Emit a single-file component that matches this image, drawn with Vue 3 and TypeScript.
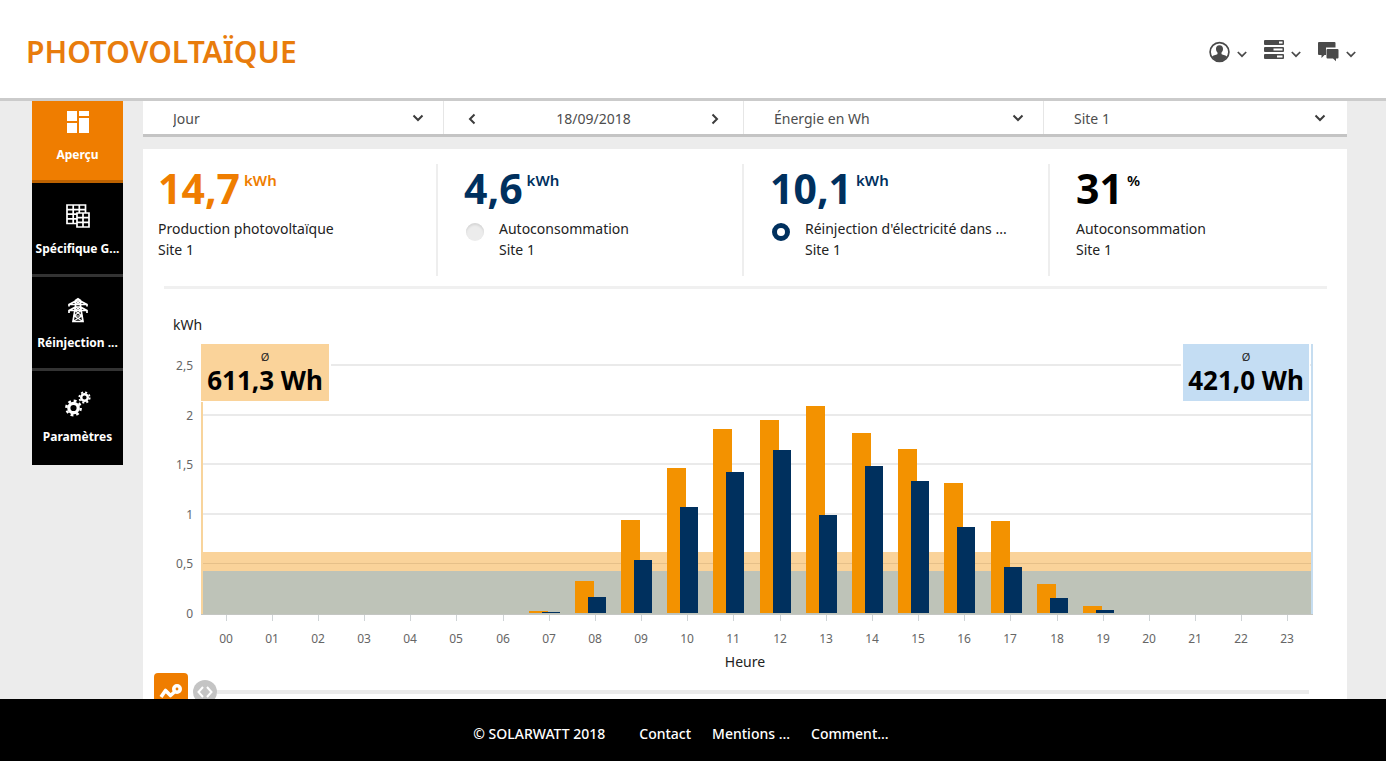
<script setup lang="ts">
import { computed, ref } from 'vue'

interface Stat {
  id: string
  value: string
  unit: string
  label: string
  site: string
  tone: 'orange' | 'navy' | 'black'
  selectable: boolean
}

const period = ref('Jour')
const mode = ref('Énergie en Wh')
const site = ref('Site 1')
const series = ref('reinjection')

const stats: Stat[] = [
  { id: 'production', value: '14,7', unit: 'kWh', label: 'Production photovoltaïque', site: 'Site 1', tone: 'orange', selectable: false },
  { id: 'autoconso', value: '4,6', unit: 'kWh', label: 'Autoconsommation', site: 'Site 1', tone: 'navy', selectable: true },
  { id: 'reinjection', value: '10,1', unit: 'kWh', label: "Réinjection d'électricité dans ...", site: 'Site 1', tone: 'navy', selectable: true },
  { id: 'taux', value: '31', unit: '%', label: 'Autoconsommation', site: 'Site 1', tone: 'black', selectable: false },
]

const production = [0, 0, 0, 0, 0, 0, 0, 0.02, 0.32, 0.94, 1.465, 1.855, 1.945, 2.09, 1.815, 1.655, 1.31, 0.93, 0.29, 0.075, 0, 0, 0, 0]
const feedIn = [0, 0, 0, 0, 0, 0, 0, 0.01, 0.16, 0.53, 1.07, 1.425, 1.645, 0.99, 1.485, 1.33, 0.865, 0.46, 0.155, 0.03, 0, 0, 0, 0]

const plot = { left: 59, right: 1168, top: 44, zero: 313, base: 314, unit: 99.2 }
const step = (plot.right - plot.left) / 24
const yOf = (v: number) => Math.round(plot.zero - v * plot.unit)

const gridLines = [
  { label: '2,5', y: yOf(2.5) },
  { label: '2', y: yOf(2) },
  { label: '1,5', y: yOf(1.5) },
  { label: '1', y: yOf(1) },
  { label: '0,5', y: yOf(0.5) },
]
const avgProduction = yOf(0.6113)
const avgFeedIn = yOf(0.421)

const hours = computed(() =>
  production.map((p, i) => {
    const prodY = yOf(p)
    const feedY = yOf(feedIn[i])
    return {
      label: String(i).padStart(2, '0'),
      center: Math.round(plot.left + step * (i + 0.5)),
      tick: Math.floor(plot.left + step * (i + 0.5) - i / 24),
      prodY,
      feedY,
      prodHeight: plot.zero - prodY,
      feedHeight: plot.zero - feedY,
    }
  }),
)
</script>

<template>
  <div class="page">
    <header class="header">
      <h1>PHOTOVOLTAÏQUE</h1>
      <nav class="tools">
        <button type="button" aria-label="Compte">
          <svg width="21" height="24" viewBox="0 0 21 24">
            <circle cx="10.5" cy="12" r="9.4" fill="none" stroke="#4a4a4a" stroke-width="1.7" />
            <path d="M10.5 5.200c2.600 0 3.700 1.700 3.500 4-.1 1.700-.9 2.600-1.500 3.300v1.600c.3.900 3.800 1.100 5.400 2.400-1.700 3-4.500 4.700-7.400 4.700s-5.700-1.700-7.400-4.700c1.600-1.300 5.100-1.500 5.400-2.400v-1.600c-.6-.7-1.400-1.600-1.500-3.300-.2-2.300.9-4 3.500-4z" fill="#4a4a4a" />
          </svg>
          <svg class="chev" width="10" height="24" viewBox="0 0 10 24"><path d="M.8 12l4.200 4.200L9.200 12" /></svg>
        </button>
        <button type="button" aria-label="Installations">
          <svg width="20" height="24" viewBox="0 0 20 24">
            <g fill="#4a4a4a">
              <rect y="0" width="20" height="5" rx="1" />
              <rect y="7" width="20" height="5" rx="1" />
              <rect y="14" width="20" height="5" rx="1" />
            </g>
            <path d="M15 2.500h3.500M9.500 9.500h9M13 16.500h5.500" stroke="#fff" stroke-width="1.800" />
          </svg>
          <svg class="chev" width="10" height="24" viewBox="0 0 10 24"><path d="M.8 12l4.200 4.200L9.200 12" /></svg>
        </button>
        <button type="button" aria-label="Messages">
          <svg width="21" height="24" viewBox="0 0 21 24">
            <path d="M1 2h15.500q1 0 1 1v4.500H8v7.500H6.500L3.500 18v-3H1q-1 0-1-1V3q0-1 1-1z" fill="#4a4a4a" />
            <path d="M9.500 9h10q1 0 1 1v7.500q0 1-1 1H18v2.800l-3-2.800H9.500q-1 0-1-1V10q0-1 1-1z" fill="#4a4a4a" />
          </svg>
          <svg class="chev" width="10" height="24" viewBox="0 0 10 24"><path d="M.8 12l4.200 4.200L9.200 12" /></svg>
        </button>
      </nav>
    </header>

    <div class="body">
      <nav class="sidebar">
        <a href="#apercu" class="active">
          <svg width="24" height="24" viewBox="0 0 24 24" fill="#fff">
            <path d="M1 1h10v10H1zM13 1h10v5H13zM1 13h10v10H1zM13 8h10v15H13z" />
          </svg>
          <span>Aperçu</span>
        </a>
        <a href="#specifique">
          <svg width="24" height="24" viewBox="0 0 24 24" fill="none" stroke="#fff" stroke-width="1.700">
            <path d="M1 1h18.500v18.500H1zM1 5.600h18.500M1 10.200h18.500M1 14.900h18.500M7.200 1v18.500M13.300 1v18.500" />
            <path d="M11 9h12v14H11z" fill="#000" />
            <path d="M11 13.600h12M11 18.300h12M17 9v14" />
          </svg>
          <span>Spécifique G...</span>
        </a>
        <a href="#reinjection">
          <svg width="24" height="24" viewBox="0 0 24 24" fill="none" stroke="#fff" stroke-width="1.700">
            <path d="M9.500 2.500L12 .8l2.500 1.700v6l2.500 15H7l2.500-15zM3 8.500V6.500L9.500 3h5L21 6.500v2M3 6.500h18M3 15v-2.500L9.300 9h5.400l6.300 3.500V15M3 12.500h18" />
            <path d="M9.500 3l5 3.500M14.500 3l-5 3.500M9.500 9l5.500 3.500M14.500 9L9 12.500l7 5.500-9 5.500M15 12.500L8 18l9 5.500M8 18h8" stroke-width="1.200" />
          </svg>
          <span>Réinjection ...</span>
        </a>
        <a href="#parametres">
          <svg width="26" height="26" viewBox="0 0 26 26" fill="none" stroke="#fff">
            <circle cx="8.500" cy="17" r="4.700" stroke-width="3.200" />
            <circle cx="8.500" cy="17" r="7.200" stroke-width="2.400" stroke-dasharray="2.830 2.824" />
            <circle cx="19.500" cy="6.500" r="3.300" stroke-width="2.400" />
            <circle cx="19.500" cy="6.500" r="5.200" stroke-width="1.800" stroke-dasharray="2.050 2.034" />
          </svg>
          <span>Paramètres</span>
        </a>
      </nav>

      <main class="content">
        <div class="filters">
          <label class="filter">
            <select v-model="period" aria-label="Période"><option>Jour</option></select>
            <svg class="arrow" width="12" height="8" viewBox="0 0 12 8"><path d="M1.500 1.500L6 6l4.500-4.500" /></svg>
          </label>
          <div class="filter date">
            <button type="button" aria-label="Jour précédent">
              <svg class="arrow" width="8" height="12" viewBox="0 0 8 12"><path d="M6.500 1.500L2 6l4.500 4.500" /></svg>
            </button>
            <span>18/09/2018</span>
            <button type="button" aria-label="Jour suivant">
              <svg class="arrow" width="8" height="12" viewBox="0 0 8 12"><path d="M1.500 1.500L6 6l-4.500 4.500" /></svg>
            </button>
          </div>
          <label class="filter">
            <select v-model="mode" aria-label="Unité"><option>Énergie en Wh</option></select>
            <svg class="arrow" width="12" height="8" viewBox="0 0 12 8"><path d="M1.500 1.500L6 6l4.500-4.500" /></svg>
          </label>
          <label class="filter">
            <select v-model="site" aria-label="Site"><option>Site 1</option></select>
            <svg class="arrow" width="12" height="8" viewBox="0 0 12 8"><path d="M1.500 1.500L6 6l4.500-4.500" /></svg>
          </label>
        </div>

        <section class="card">
          <div class="stats">
            <div v-for="s in stats" :key="s.id" class="stat" :class="s.tone">
              <div class="figure">
                <strong>{{ s.value }}</strong>
                <span class="unit">{{ s.unit }}</span>
              </div>
              <label v-if="s.selectable" class="caption">
                <input v-model="series" type="radio" name="series" :value="s.id" />
                <span>{{ s.label }}<br />{{ s.site }}</span>
              </label>
              <p v-else class="caption">{{ s.label }}<br />{{ s.site }}</p>
            </div>
          </div>
          <hr />

          <svg class="chart" viewBox="0 0 1204 384" role="img" aria-label="Énergie par heure">
            <text class="axis-title" x="30" y="30">kWh</text>
            <g v-for="g in gridLines" :key="g.label">
              <rect :x="plot.left" :y="g.y - 1" :width="plot.right - plot.left" height="2" fill="#eaeaea" />
              <text class="tick-label" x="50" :y="g.y + 5" text-anchor="end">{{ g.label }}</text>
            </g>
            <text class="tick-label" x="50" :y="plot.base + 4" text-anchor="end">0</text>

            <rect :x="plot.left" :y="avgProduction" :width="plot.right - plot.left" :height="plot.base - avgProduction" fill="#fad39a" />
            <rect :x="plot.left" :y="yOf(0.5)" :width="plot.right - plot.left" height="1" fill="#e6c089" />
            <rect :x="plot.left" :y="avgFeedIn" :width="plot.right - plot.left" :height="plot.base - avgFeedIn" fill="#bec3b8" />
            <rect x="58" :y="plot.top" width="2" :height="plot.base - plot.top" fill="#f8d49c" />
            <rect x="1168" :y="plot.top" width="2" :height="plot.base - plot.top" fill="#c6ddf0" />

            <g v-for="h in hours" :key="h.label">
              <rect :x="h.center - 20" :y="h.prodY" width="19" :height="h.prodHeight" fill="#f39200" />
              <rect :x="h.center - 7" :y="h.feedY" width="18" :height="h.feedHeight" fill="#00305e" />
              <rect :x="h.tick + 1" y="315" width="1" height="6" fill="#cfd4d6" />
              <text class="tick-label" :x="h.tick + 1" y="343" text-anchor="middle">{{ h.label }}</text>
            </g>
            <rect x="58" :y="plot.base" width="1112" height="1" fill="#c4c6c2" />

            <rect x="58" y="42" width="130" height="60" fill="#fff" />
            <rect x="58" y="44" width="128" height="57" fill="#fad39a" />
            <text class="avg-sign" x="122" y="61" text-anchor="middle">Ø</text>
            <text class="avg-value" x="122" y="90" text-anchor="middle">611,3 Wh</text>
            <rect x="1038" y="42" width="129" height="60" fill="#fff" />
            <rect x="1040" y="44" width="126" height="57" fill="#c4ddf3" />
            <text class="avg-sign" x="1103" y="61" text-anchor="middle">Ø</text>
            <text class="avg-value" x="1103" y="90" text-anchor="middle">421,0 Wh</text>
            <text class="axis-title" x="602" y="367" text-anchor="middle">Heure</text>
          </svg>

          <div class="zoombar">
            <button type="button" class="curve" aria-label="Courbe">
              <svg width="24" height="18" viewBox="0 0 24 18" fill="none" stroke="#fff" stroke-width="3.600" stroke-linejoin="round">
                <path d="M2 14l4.500-6.500 5 5L16 8.500" />
                <circle cx="18" cy="6" r="3.200" />
              </svg>
            </button>
            <button type="button" class="handle" aria-label="Zoom">
              <svg width="16" height="12" viewBox="0 0 16 12" fill="none" stroke="#fff" stroke-width="2">
                <path d="M6 1L1.500 6 6 11M10 1l4.500 5L10 11" />
              </svg>
            </button>
            <div class="track"></div>
          </div>
        </section>
      </main>
    </div>

    <footer class="footer">
      <span>© SOLARWATT 2018</span>
      <a href="#contact">Contact</a>
      <a href="#mentions">Mentions ...</a>
      <a href="#comment">Comment...</a>
    </footer>
  </div>
</template>

<style>
body {
  margin: 0;
  background: #ececec;
}
</style>

<style scoped>
* {
  box-sizing: border-box;
}
.page {
  display: flex;
  flex-direction: column;
  height: 100vh;
  overflow: hidden;
  background: #ececec;
  color: #222;
  font: 14px/21px "Noto Sans", "Open Sans", sans-serif;
}
button {
  display: flex;
  align-items: center;
  padding: 0;
  border: 0;
  background: none;
  cursor: pointer;
}
.header {
  flex: none;
  display: flex;
  align-items: center;
  justify-content: space-between;
  height: 101px;
  padding: 5px 30px 0 26px;
  border-bottom: 3px solid #cbcbcb;
  background: #fff;
}
h1 {
  margin: 0;
  color: #e87c0c;
  font-size: 30px;
  font-weight: 600;
  line-height: 40px;
}
.tools {
  display: flex;
  gap: 17px;
}
.tools button {
  gap: 7px;
}
.chev {
  fill: none;
  stroke: #4a4a4a;
  stroke-width: 1.7;
}
.body {
  flex: 1;
  min-height: 0;
  display: flex;
  align-items: flex-start;
  gap: 20px;
  padding: 0 39px 0 32px;
  overflow: hidden;
}
.sidebar {
  flex: none;
  width: 91px;
  margin-top: -12px;
}
.sidebar a {
  display: flex;
  flex-direction: column;
  align-items: center;
  height: 94px;
  padding-top: 20px;
  border-bottom: 3px solid #333;
  background: #000;
  color: #fff;
  font-size: 12px;
  font-weight: 700;
  line-height: 20px;
  text-decoration: none;
  white-space: nowrap;
}
.sidebar a svg {
  height: 26px;
}
.sidebar a span {
  margin-top: 10px;
}
.sidebar a.active {
  background: #ef7d00;
  border-color: #bd6200;
}
.sidebar a:last-child {
  border-color: #000;
}
.content {
  flex: 1;
  min-width: 0;
}
.filters {
  display: grid;
  grid-template-columns: 301fr 300fr 300fr 303fr;
  height: 36px;
  margin-bottom: 12px;
  border-bottom: 3px solid #c4c4c4;
  background: #fff;
}
.filter {
  display: flex;
  align-items: center;
  padding-right: 19px;
  border-right: 1px solid #e6e6e6;
  color: #4d4d4d;
}
.filter:last-child {
  padding-right: 21px;
  border: 0;
}
.filter select {
  flex: 1;
  height: 32px;
  padding: 2px 0 0 30px;
  border: 0;
  appearance: none;
  background: transparent;
  color: inherit;
  font: inherit;
}
.date {
  justify-content: space-between;
  padding: 2px 24px 0;
}
.arrow {
  fill: none;
  stroke: #3c3c3c;
  stroke-width: 2;
}
.card {
  padding-top: 15px;
  background: #fff;
}
.stats {
  display: grid;
  grid-template-columns: 295fr 306fr 306fr 297fr;
  height: 112px;
}
.stat {
  padding-left: 26px;
  border-right: 2px solid #eee;
}
.stat:first-child {
  padding-left: 15px;
}
.stat:last-child {
  border: 0;
}
.figure {
  display: flex;
  gap: 4px;
}
.figure strong {
  font-size: 41px;
  line-height: 48px;
}
.unit {
  font-size: 15px;
  font-weight: 600;
  line-height: 32px;
}
.orange .figure {
  color: #ef7d00;
}
.navy .figure {
  color: #00305e;
}
.black .figure {
  color: #000;
}
.caption {
  display: flex;
  align-items: flex-start;
  margin: 6px 0 0;
  white-space: nowrap;
}
.caption input {
  flex: none;
  width: 18px;
  height: 18px;
  margin: 5px 15px 0 2px;
  border-radius: 50%;
  appearance: none;
  background: #ececec;
  box-shadow: inset 0 2px 2px #d6d6d6;
}
.caption input:checked {
  border: 5px solid #00305e;
  background: #fff;
  box-shadow: none;
}
hr {
  height: 3px;
  margin: 10px 20px 0 21px;
  border: 0;
  background: #f0f0f0;
}
.chart {
  display: block;
  width: 100%;
  margin-top: 11px;
}
.axis-title {
  fill: #222;
  font-size: 14px;
}
.tick-label {
  fill: #666;
  font-size: 12px;
}
.avg-sign {
  fill: #222;
  font-size: 11px;
}
.avg-value {
  fill: #000;
  font-size: 26px;
  font-weight: 700;
}
.zoombar {
  display: flex;
  align-items: center;
  height: 40px;
  margin-top: -12px;
  padding: 0 38px 0 11px;
}
.curve {
  justify-content: center;
  width: 34px;
  height: 38px;
  border-radius: 4px;
  background: #ef7d00;
}
.handle {
  justify-content: center;
  width: 24px;
  height: 24px;
  margin-left: 5px;
  border-radius: 50%;
  background: #c4c4c4;
}
.track {
  flex: 1;
  height: 4px;
  background: #ebebeb;
}
.footer {
  flex: none;
  display: flex;
  align-items: center;
  justify-content: center;
  gap: 21px;
  height: 62px;
  padding: 6px 24px 0 0;
  background: #000;
  color: #fff;
  font-weight: 500;
}
.footer span {
  margin-right: 13px;
}
.footer a {
  color: #fff;
  text-decoration: none;
}
</style>
